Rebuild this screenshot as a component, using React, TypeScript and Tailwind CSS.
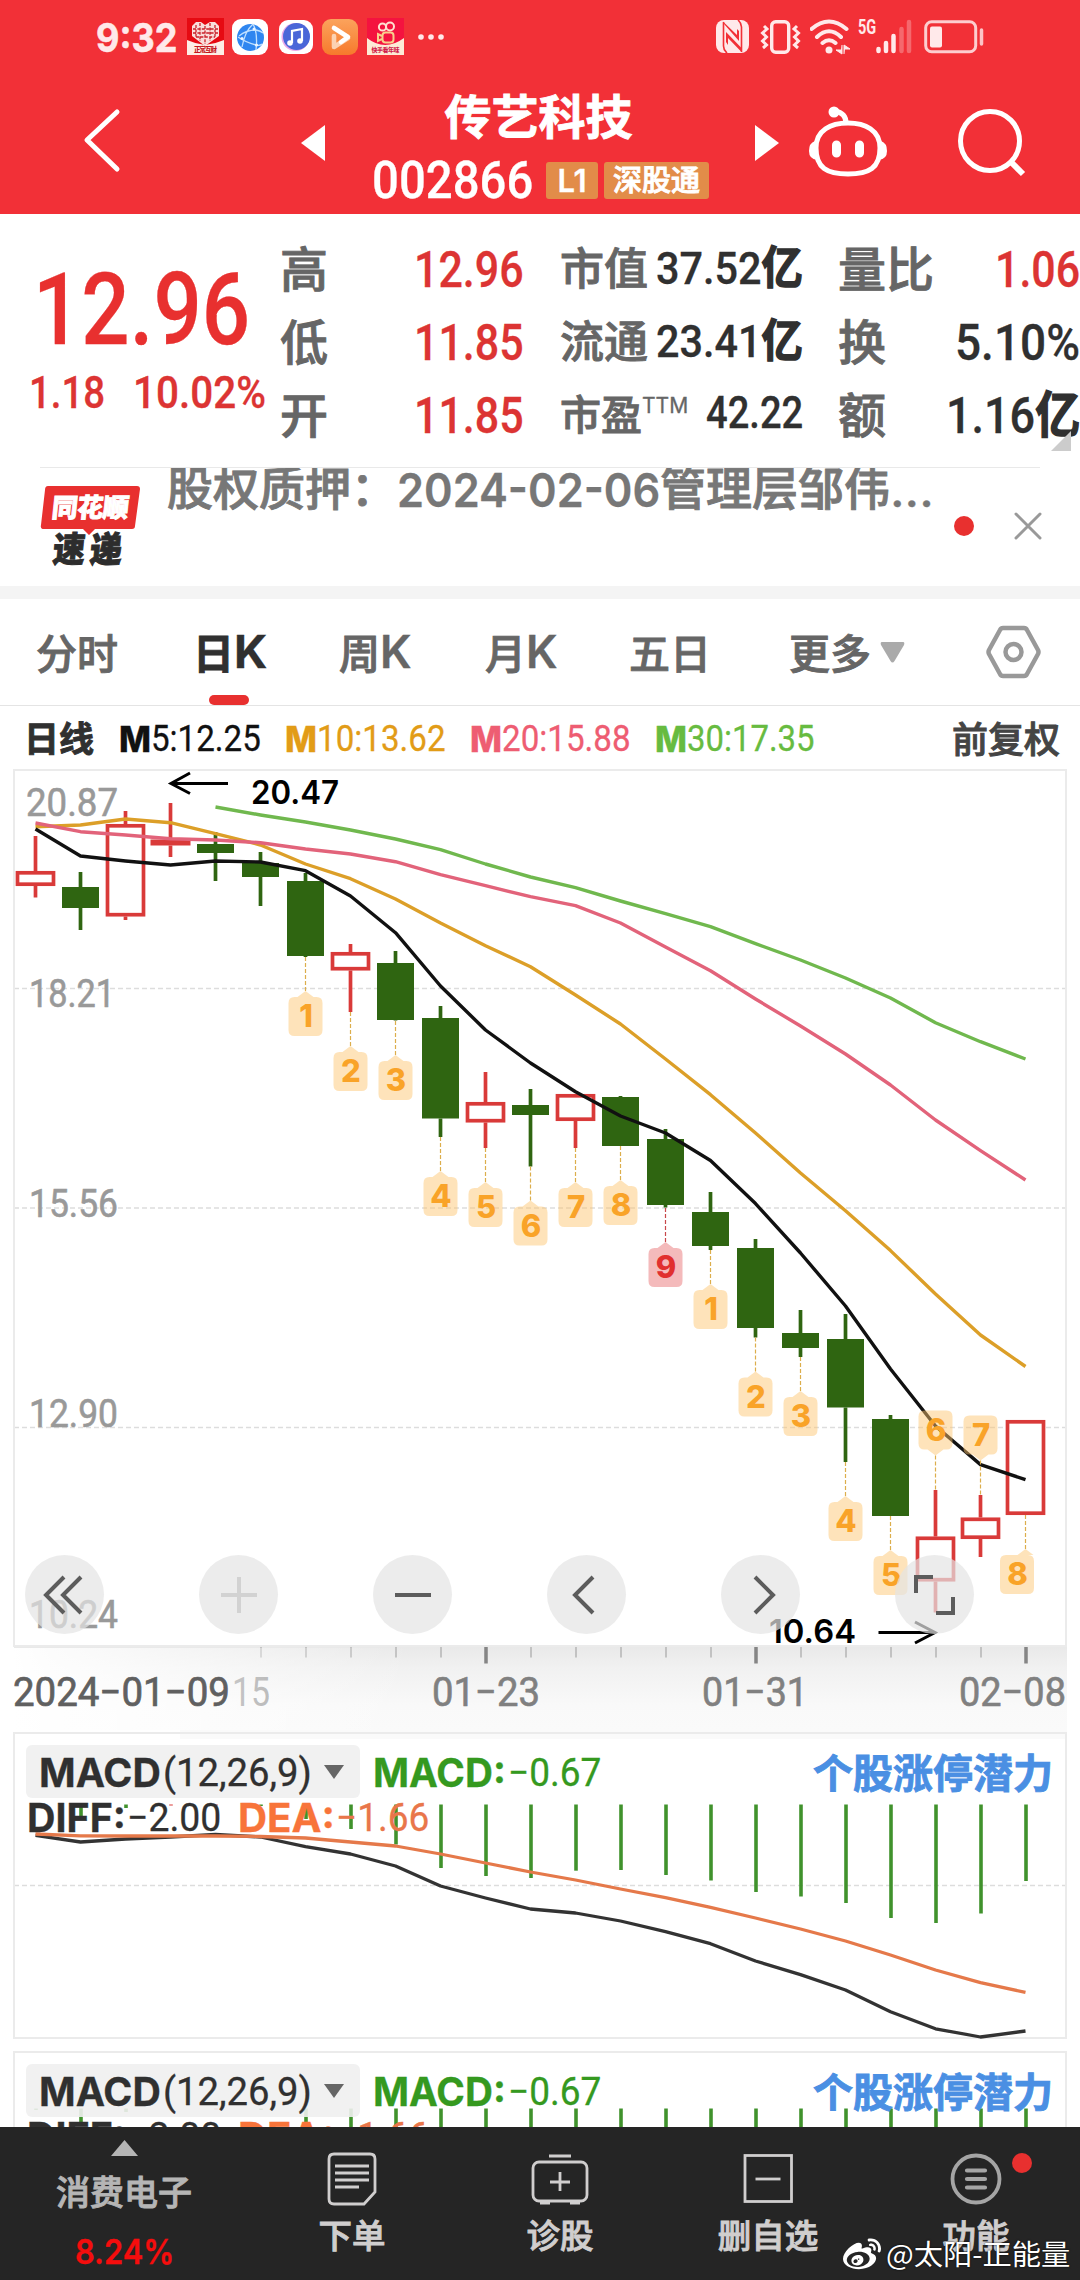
import React, { useLayoutEffect, useRef } from "react";
import { FaWeibo } from "react-icons/fa";

/** Single line of text squeezed or stretched to an exact width. */
function Fit({ w, className = "", children }: { w: number; className?: string; children: React.ReactNode }) {
  const ref = useRef<HTMLSpanElement>(null);
  useLayoutEffect(() => {
    const el = ref.current;
    if (el && el.offsetWidth) el.style.transform = `scaleX(${w / el.offsetWidth})`;
  }, [w]);
  return (
    <span className={"block shrink-0 whitespace-nowrap " + className} style={{ width: w }}>
      <span ref={ref} className="inline-block origin-left">
        {children}
      </span>
    </span>
  );
}

const CJK = "font-['Noto_Sans_CJK_SC',sans-serif] [-webkit-text-stroke:0.9px]";
const NUM = "font-['Roboto','Noto_Sans_CJK_SC',sans-serif] [-webkit-text-stroke:0.3px]";
const GEO = "font-['Inter','Noto_Sans_CJK_SC',sans-serif] [-webkit-text-stroke:0.3px]";

function StatusBar() {
  return (
    <div className="flex h-[72px] items-center pt-px text-[#ffe9ea]">
      <Fit w={81} className="ml-[96px] font-['Inter',sans-serif] text-[40px] font-bold leading-[40px] [-webkit-text-stroke:0.6px] pt-[3px]">9:32</Fit>
      <svg className="ml-[10px]" width="37" height="37" viewBox="0 0 37 37">
        <rect width="37" height="37" fill="#e60a12" />
        <path d="M0 22Q9 26 18 27Q28 26 37 22V37H0Z" fill="#fdeee6" />
        <path d="M18 28L5 18V8L9 4H14L18 7L23 4H28L32 8V18Z" fill="#f9dedb" />
        <path d="M9 7V19M13 5V23M18 8V26M23 5V23M28 7V19M6 11H31M6 15H31M9 19H28" stroke="#c9212a" strokeWidth="1.3" strokeDasharray="3 1.4" />
        <text x="18.5" y="34" textAnchor="middle" fontSize="6.5" fontWeight="900" fill="#c4161c" fontFamily="Noto Sans CJK SC" textLength="23">正常互财</text>
      </svg>
      <svg className="ml-[8px]" width="36" height="36" viewBox="0 0 36 36">
        <rect width="36" height="36" rx="9" fill="#fff" />
        <circle cx="18.500" cy="18.500" r="13.500" fill="#2f86f0" />
        <path d="M6 18Q13 23 24 26Q28 27 30 25M21 5Q13 12 10 28M21 5Q26 14 24 31M7 17Q14 11 24 11Q29 12 31 14" stroke="#bfe0ff" strokeWidth="1.300" fill="none" />
        <circle cx="10" cy="19.500" r="1.500" fill="#e9f4ff" /><circle cx="24.500" cy="26" r="1.600" fill="#e9f4ff" /><circle cx="22" cy="10" r="1.500" fill="#e9f4ff" />
      </svg>
      <svg className="ml-[11px]" width="34" height="34" viewBox="0 0 34 34">
        <rect width="34" height="34" rx="9" fill="#fff" />
        <circle cx="16.500" cy="17" r="14" fill="#e9a9e8" />
        <circle cx="17.500" cy="16.500" r="13.500" fill="#4a66d8" />
        <path d="M13 23V11L23 9V21" fill="none" stroke="#fff" strokeWidth="2.200" />
        <circle cx="11" cy="23" r="2.800" fill="#fff" /><circle cx="21" cy="21" r="2.800" fill="#fff" />
      </svg>
      <svg className="ml-[9px]" width="36" height="36" viewBox="0 0 36 36">
        <defs><linearGradient id="vid" x1="0" x2="0" y1="0" y2="1"><stop stopColor="#fba35c" /><stop offset="1" stopColor="#f7792c" /></linearGradient></defs>
        <rect width="36" height="36" rx="9" fill="url(#vid)" />
        <path d="M12 17V28L26 19" fill="none" stroke="#fcd2b2" strokeWidth="4.600" strokeLinejoin="round" strokeLinecap="round" />
        <path d="M12 9L26 18L19 23" fill="none" stroke="#fff" strokeWidth="4.600" strokeLinejoin="round" strokeLinecap="round" />
      </svg>
      <svg className="ml-[9px]" width="37" height="37" viewBox="0 0 37 37">
        <rect width="37" height="37" fill="#f4133f" />
        <path d="M0 20Q18 34 37 20V37H0Z" fill="#fdebd6" />
        <g fill="none" stroke="#ffe0d0" strokeWidth="2">
          <circle cx="15.500" cy="9" r="3.600" /><circle cx="23" cy="8.500" r="4" />
          <rect x="15.500" y="14.500" width="11" height="10" rx="3" stroke="#f8cf8c" /><path d="M15 18L11 16V23L15 21" stroke="#f8cf8c" />
        </g>
        <text x="18.500" y="33.500" textAnchor="middle" fontSize="6" fontWeight="900" fill="#d01c4a" fontFamily="Noto Sans CJK SC" textLength="28">快手看年味</text>
      </svg>
      <svg className="ml-[13px]" width="28" height="8" viewBox="0 0 28 8" fill="currentColor">
        <circle cx="4" cy="4" r="2.800" /><circle cx="14" cy="4" r="2.800" /><circle cx="24" cy="4" r="2.800" />
      </svg>
      <svg className="ml-[271px]" width="33" height="33" viewBox="0 0 33 33">
        <rect width="33" height="33" rx="8" fill="currentColor" />
        <path d="M7.500 2V26Q7.500 30 11 33M22 0Q25.500 3 25.500 7V32" fill="none" stroke="#f23037" strokeWidth="1.600" />
        <path d="M7 1.500L21 15V9L23 11V21L8 4ZM25.500 32L12 18V25L10 22V12L25.500 28Z" fill="#f23037" />
      </svg>
      <svg className="ml-[11px]" width="41" height="34" viewBox="0 0 41 34" fill="none" stroke="currentColor" strokeWidth="3.400">
        <rect x="11.700" y="1.700" width="17" height="30.600" rx="4" />
        <path d="M4 6L7 9L2.500 13L6.500 17L2.500 21L6.500 25L3 28M37 6L34 9L38.500 13L34.500 17L38.500 21L34.500 25L38 28" strokeWidth="3" />
      </svg>
      <svg className="ml-[9px]" width="41" height="36" viewBox="0 0 41 36" fill="none" stroke="currentColor" strokeWidth="4">
        <path d="M1.500 10Q19 -5 36.500 10M7 18Q19 6.500 31 18M12.500 24Q19 18.500 25.500 24" strokeLinecap="round" />
        <circle cx="19" cy="31" r="3.500" fill="currentColor" stroke="none" />
        <path d="M32 26V35L26 31H31M34 35V26L40 30H35" fill="currentColor" strokeWidth="1" />
      </svg>
      <Fit w={18} className="ml-[7px] -mt-[20px] font-['Roboto',sans-serif] text-[21px] font-bold leading-[20px]">5G</Fit>
      <svg width="36" height="35" viewBox="0 0 36 35" stroke="currentColor" strokeWidth="4.500" strokeLinecap="round">
        <path d="M2.500 30V32M10 24V32M17.500 17V32" /><path d="M25.500 10V32M33 3V32" opacity=".3" />
      </svg>
      <svg className="ml-[12px]" width="61" height="34" viewBox="0 0 61 34" fill="none" stroke="currentColor">
        <rect x="1.700" y="1.700" width="50" height="30" rx="6" strokeWidth="3" opacity=".85" />
        <rect x="6" y="6.500" width="12" height="21" rx="2" fill="currentColor" stroke="none" />
        <path d="M57.500 10V24" strokeWidth="3.500" strokeLinecap="round" opacity=".8" />
      </svg>
    </div>
  );
}

function Header() {
  return (
    <div className="flex h-[142px] items-start text-white">
      <svg className="ml-[80px] mt-[34px]" width="44" height="70" viewBox="0 0 44 70" fill="none" stroke="currentColor" strokeWidth="5" strokeLinecap="round" strokeLinejoin="round">
        <path d="M37 6L7 34L37 63" />
      </svg>
      <svg className="ml-[177px] mt-[53px]" width="24" height="36" viewBox="0 0 24 36" fill="currentColor"><path d="M24 0V36L0 18Z" /></svg>
      <div className="ml-[47px] w-[338px]">
        <div className={`mt-[16px] pr-[5px] text-center text-[47px] font-bold leading-[52px] ${CJK}`}>传艺科技</div>
        <div className="mt-[15px] flex items-center">
          <Fit w={161} className={`text-[52px] font-medium leading-[48px] pt-[2px] ${NUM}`}>002866</Fit>
          <div className={`ml-[13px] flex h-[37px] w-[52px] items-center justify-center rounded-[3px] bg-[#e28c49] text-[31px] font-semibold leading-[37px] ${GEO}`}>L1</div>
          <div className={`ml-[6px] flex h-[37px] w-[105px] items-center justify-center rounded-[3px] bg-[#e28c49] pb-[3px] text-[29px] font-medium leading-[37px] ${CJK}`}>深股通</div>
        </div>
      </div>
      <svg className="ml-[45px] mt-[53px]" width="24" height="36" viewBox="0 0 24 36" fill="currentColor"><path d="M0 0V36L24 18Z" /></svg>
      <svg className="ml-[29px] mt-[33px]" width="80" height="75" viewBox="0 0 80 75" fill="none" stroke="currentColor" strokeWidth="5">
        <path d="M40 18C57 18 72 25 72 43C72 63 61 69 40 69C19 69 8 63 8 43C8 25 23 18 40 18Z" />
        <path d="M38 18Q38 8 27 6" />
        <circle cx="26" cy="7" r="5.500" fill="currentColor" stroke="none" />
        <path d="M7 36Q1 38 1 46Q1 54 9 55ZM73 36Q79 38 79 46Q79 54 71 55Z" fill="currentColor" stroke="none" />
        <path d="M28.500 40V48M51.500 40V48" strokeWidth="9" strokeLinecap="round" />
      </svg>
      <svg className="ml-[68px] mt-[34px]" width="72" height="72" viewBox="0 0 72 72" fill="none" stroke="currentColor" strokeWidth="5">
        <circle cx="34" cy="35" r="29.500" /><path d="M55 56L67 68" strokeWidth="6" />
      </svg>
    </div>
  );
}

function Row({ label, children, size = "text-[48px]" }: { label: React.ReactNode; children: React.ReactNode; size?: string }) {
  return (
    <div className={`flex h-[73px] items-center justify-between text-[#666] ${CJK}`}>
      <span className={`-ml-px -mt-[5px] whitespace-nowrap font-medium leading-[60px] ${size}`}>{label}</span>
      {children}
    </div>
  );
}

const red = "text-[50px] pt-[2px] font-medium leading-[60px] text-[#dc3433] " + NUM;
const dark = "font-medium leading-[60px] text-[#303030] " + NUM;
const yi = "font-bold [-webkit-text-stroke:1.4px]";

function Quote() {
  return (
    <div className="relative flex h-[253px] pt-[18px]">
      <div className="w-[281px] text-[#e8302f]">
        <Fit w={217} className={`ml-[33px] mt-[28px] text-[100px] font-medium leading-[100px] ${NUM}`}>12.96</Fit>
        <div className="mt-[8px] flex text-[45px] font-medium leading-[50px] text-[#dc3433]">
          <Fit w={76} className={`ml-[29px] ${NUM}`}>1.18</Fit>
          <Fit w={133} className={`ml-[28px] ${NUM}`}>10.02%</Fit>
        </div>
      </div>
      <div className="w-[243px]">
        <Row label="高"><Fit w={110} className={red}>12.96</Fit></Row>
        <Row label="低"><Fit w={110} className={red}>11.85</Fit></Row>
        <Row label="开"><Fit w={110} className={red}>11.85</Fit></Row>
      </div>
      <div className="ml-[37px] w-[242px]">
        <Row label="市值" size="text-[44px]"><Fit w={147} className={`text-[45px] ${dark}`}>37.52<b className={yi}>亿</b></Fit></Row>
        <Row label="流通" size="text-[44px]"><Fit w={147} className={`text-[45px] ${dark}`}>23.41<b className={yi}>亿</b></Fit></Row>
        <Row label={<span className="flex">市盈<Fit w={46} className="-mt-[7px] font-['Inter',sans-serif] text-[22px] font-normal [-webkit-text-stroke:0.3px]">TTM</Fit></span>} size="text-[41px]">
          <Fit w={97} className={`-mt-[4px] text-[44px] ${dark}`}>42.22</Fit>
        </Row>
      </div>
      <div className="ml-[36px] w-[241px]">
        <Row label="量比"><Fit w={85} className={red}>1.06</Fit></Row>
        <Row label="换"><Fit w={125} className={`pt-[2px] text-[50px] ${dark}`}>5.10%</Fit></Row>
        <Row label="额"><Fit w={134} className={`pt-[2px] text-[50px] ${dark}`}>1.16<b className={yi}>亿</b></Fit></Row>
      </div>
      <svg className="absolute bottom-[16px] right-[9px]" width="20" height="20" viewBox="0 0 20 20"><path d="M20 0V20H0Z" fill="#ccc" /></svg>
    </div>
  );
}

function News() {
  return (
    <div className="flex h-[119px] flex-col pl-[40px]">
      <div className="h-px w-[1000px] shrink-0 bg-[#e9e9e9]" />
      <div className="flex h-[118px] items-start overflow-hidden">
        <div className={`mt-[18px] w-[100px] ${CJK}`}>
          <div className="relative flex h-[43px] items-center justify-center">
            <svg className="absolute inset-0" width="100" height="50" viewBox="0 0 100 50"><path d="M8 0H97Q100 0 100 3L95 40Q95 43 92 43H55L49 49L43 43H4Q0 43 1 39L5 4Q5 0 8 0Z" fill="#e8302f" /></svg>
            <span className="relative -skew-x-6 pb-[3px] text-[26px] font-black leading-[30px] tracking-[-0.5px] text-white">同花顺</span>
          </div>
          <div className="-mt-px -skew-x-6 scale-y-110 pl-[1px] text-center text-[32px] font-black leading-[38px] tracking-[5px] text-[#2d2d2d]">速递</div>
        </div>
        <div className={`ml-[27px] flex h-[60px] w-[770px] text-[46px] font-medium leading-[52px] text-[#777] ${CJK}`}>
          <span className="-mt-[9px] w-[230px] shrink-0">股权质押：</span>
          <Fit w={263} className={`-mt-[4px] text-[47px] font-semibold ${GEO}`}>2024-02-06</Fit>
          <span className="-mt-[9px] whitespace-nowrap">管理层邹伟</span>
          <Fit w={44} className={`-mt-[4px] ${GEO}`}>...</Fit>
        </div>
        <span className="ml-[17px] mt-[48px] size-[20px] rounded-full bg-[#e8302f]" />
        <svg className="ml-[40px] mt-[44px]" width="28" height="28" viewBox="0 0 28 28" stroke="#999" strokeWidth="3" strokeLinecap="round"><path d="M2 2L26 26M26 2L2 26" /></svg>
      </div>
    </div>
  );
}

function Tabs() {
  const t = "whitespace-nowrap pb-[2px] text-[41px] font-medium leading-[50px] text-[#666]";
  return (
    <div className={`flex h-[107px] items-center border-b border-[#e4e4e4] ${CJK}`}>
      <span className={`ml-[36px] w-[157px] ${t}`}>分时</span>
      <span className="relative flex h-full w-[146px] items-center">
        <span className="flex items-center whitespace-nowrap text-[41px] font-bold leading-[50px] text-[#303030]"><span className="pb-[2px]">日</span><Fit w={33} className={`text-[45px] ${GEO}`}>K</Fit></span>
        <span className="absolute bottom-0 left-[16px] h-[10px] w-[40px] rounded-full bg-[#e8302f]" />
      </span>
      <span className={`flex w-[146px] items-center ${t}`}>周<Fit w={32} className={`pt-[2px] text-[45px] font-semibold ${GEO}`}>K</Fit></span>
      <span className={`flex w-[144px] items-center ${t}`}>月<Fit w={32} className={`pt-[2px] text-[45px] font-semibold ${GEO}`}>K</Fit></span>
      <span className={`w-[160px] ${t}`}>五日</span>
      <span className={t}>更多</span>
      <svg className="ml-[9px]" width="25" height="21" viewBox="0 0 25 21" fill="#aaa"><path d="M2 0H23Q25 0 24 3L14.500 19Q12.500 22 10.500 19L1 3Q0 0 2 0Z" /></svg>
      <svg className="ml-[81px]" width="55" height="54" viewBox="0 0 55 54" fill="none" stroke="#999" strokeWidth="4.500" strokeLinejoin="round">
        <path d="M17 3H38Q40 3 41 5L52 25Q53 27 52 29L41 49Q40 51 38 51H17Q15 51 14 49L3 29Q2 27 3 25L14 5Q15 3 17 3Z" /><circle cx="27.500" cy="27" r="8" />
      </svg>
    </div>
  );
}

function Ma({ c, n, v, w, ml }: { c: string; n: string; v: string; w: number; ml: string }) {
  return (
    <span className={`flex items-center ${c} ${ml}`}>
      <Fit w={32} className={`text-[36px] font-extrabold leading-[40px] ${GEO}`}>M</Fit>
      <Fit w={w} className={`text-[37px] font-normal leading-[40px] ${NUM}`}>{n}:{v}</Fit>
    </span>
  );
}

function MaRow() {
  return (
    <div className={`flex h-[60px] items-center pt-[6px] ${CJK}`}>
      <span className="ml-[24px] -mt-[4px] w-[95px] text-[35px] font-bold leading-[40px] text-[#303030]">日线</span>
      <Ma ml="" c="text-[#111]" n="5" v="12.25" w={110} />
      <Ma ml="ml-[24px]" c="text-[#e29c17]" n="10" v="13.62" w={129} />
      <Ma ml="ml-[24px]" c="text-[#ee5d72]" n="20" v="15.88" w={129} />
      <Ma ml="ml-[24px]" c="text-[#67bb40]" n="30" v="17.35" w={128} />
      <span className="-mt-[4px] ml-auto mr-[20px] text-[36px] font-medium leading-[40px] text-[#444]">前复权</span>
    </div>
  );
}

const X = (i: number) => 35.5 + 45 * i;
// [direction, high, top of body, bottom of body, low] in drawing units
const candles: [number, number, number, number, number][] = [
  [1, 836, 871, 886, 897.5], [0, 872, 887, 908, 930], [1, 811, 824, 916.5, 920], [2, 803, 839.5, 845.5, 857],
  [0, 832, 844, 853, 881], [0, 852, 863, 877, 906], [0, 873, 881, 956, 957], [1, 944, 952, 970.5, 1012],
  [0, 951, 963, 1020, 1020.5], [0, 1006, 1018, 1118.5, 1137], [1, 1072, 1102, 1122.5, 1148], [0, 1089, 1105, 1115, 1166.5],
  [1, 1094, 1094, 1121, 1148], [0, 1096, 1097, 1146, 1146], [0, 1129, 1139, 1205, 1207.5], [0, 1192, 1212, 1246, 1250],
  [0, 1239, 1248, 1328, 1337.5], [0, 1310, 1333, 1348, 1357], [0, 1314, 1339, 1407.5, 1462], [0, 1415, 1419, 1516, 1516],
  [1, 1490, 1536.5, 1581.5, 1612.5], [1, 1495, 1517.5, 1539, 1557], [1, 1420, 1420, 1515, 1515],
];
const m5 = [829, 856, 861, 865, 861, 862, 870.7, 896, 932.7, 986, 1030, 1063, 1091.7, 1116, 1133, 1160.5, 1203.6, 1253, 1306, 1369, 1426, 1464.6, 1479.6];
const m10 = [826.7, 825, 819, 822.7, 833.7, 845, 864, 878.7, 899, 923, 945.7, 966.7, 995, 1024, 1059, 1094.7, 1133, 1173, 1210.7, 1250.6, 1294, 1335, 1366.5];
const m20 = [823, 831.7, 835, 838.7, 840, 842.7, 849, 854, 861.7, 874.7, 885.7, 896.7, 905.7, 923, 947, 970.7, 999, 1026, 1054, 1085, 1120, 1150.6, 1180];
const m30 = [807, 815, 822, 830, 839, 849.7, 864, 877, 887.7, 901, 913.7, 926.7, 943.7, 960, 978, 998, 1022.7, 1041.7, 1059];
const pts = (a: number[], s = 0) => a.map((y, i) => `${X(i + s)},${y}`).join(" ");
// [candle index, count, apex y, points down]
const tags: [number, number, number, boolean?][] = [
  [6, 1, 991], [7, 2, 1046], [8, 3, 1055], [9, 4, 1171], [10, 5, 1182], [11, 6, 1200.5], [12, 7, 1182], [13, 8, 1180], [14, 9, 1242],
  [15, 1, 1284], [16, 2, 1371.5], [17, 3, 1391], [18, 4, 1496], [19, 5, 1550], [20, 6, 1455.5, true], [21, 7, 1460.5, true], [22, 8, 1549],
];

function Axis({ x, y, w, children }: { x: number; y: number; w: number; children: string }) {
  return <text x={x} y={y} fontSize="39" textLength={w} lengthAdjust="spacingAndGlyphs" fill="#999" stroke="#999" strokeWidth="0.6" className="font-['Roboto',sans-serif]">{children}</text>;
}

function RoundButton({ children, faint }: { children: React.ReactNode; faint?: boolean }) {
  return (
    <span className={`flex size-[79px] items-center justify-center rounded-full bg-[#e4e4e4]/70 ${faint ? "text-[#d2d2d2]" : "text-[#5c5c5c]"}`}>
      <svg width="50" height="50" viewBox="-25 -25 50 50" fill="none" stroke="currentColor" strokeWidth="4">{children}</svg>
    </span>
  );
}

function KChart() {
  return (
    <div className="relative h-[964px]">
      <svg className="block" width="1080" height="964" viewBox="0 766 1080 964">
        <defs>
          <linearGradient id="sh" x1="0" x2="0" y1="0" y2="1"><stop stopColor="#e9e9e9" /><stop offset=".25" stopColor="#f1f1f1" /><stop offset=".7" stopColor="#f9f9f9" /><stop offset="1" stopColor="#fafafa" /></linearGradient>
          <linearGradient id="fade" x1="0" x2="1" y1="0" y2="0"><stop offset="0" stopColor="#fff" /><stop offset=".1" stopColor="#fff" stopOpacity=".85" /><stop offset="1" stopColor="#fff" stopOpacity="0" /></linearGradient>
        </defs>
        <rect x="14" y="1647" width="1053" height="83" fill="url(#sh)" />
        {candles.map((_, i) => i > 4 && (
          <line key={i} x1={X(i) + 0.5} x2={X(i) + 0.5} y1="1647" y2={i === 10 || i === 16 || i === 22 ? 1663.5 : 1657.5} stroke={i === 10 || i === 16 || i === 22 ? "#858585" : "#c2c2c2"} strokeWidth={i === 10 || i === 16 || i === 22 ? 3.5 : 2} />
        ))}
        <text x="232" y="1706" fontSize="40" textLength="38" lengthAdjust="spacingAndGlyphs" fill="#9a9a9a" className="font-['Roboto',sans-serif]">15</text>
        <rect x="13" y="1648" width="400" height="82" fill="url(#fade)" />
        <g stroke="#ddd" strokeWidth="1.300" strokeDasharray="5 3"><path d="M14 988.500H1066M14 1208H1066M14 1427.500H1066" /></g>
        <rect x="14" y="770" width="1052" height="876" fill="none" stroke="#ebebeb" strokeWidth="2" />
        <Axis x={26} y={816} w={92}>20.87</Axis>
        <Axis x={29} y={1007} w={86}>18.21</Axis>
        <Axis x={29} y={1217} w={89}>15.56</Axis>
        <Axis x={29} y={1427} w={89}>12.90</Axis>
        <Axis x={29} y={1627.5} w={89}>10.24</Axis>
        {candles.map(([d, h, t, b, l], i) => {
          const c = d ? "#d93a39" : "#2f6511";
          const x = X(i);
          return (
            <g key={i} stroke={c} strokeWidth="3.700">
              {h < t && <line x1={x} x2={x} y1={h} y2={t} />}
              {l > b && <line x1={x} x2={x} y1={b} y2={l} />}
              {d === 1 ? <rect x={x - 18} y={t + 1.8} width="36" height={b - t - 3.6} fill="#fff" /> : <rect x={x - (d ? 20 : 18.500)} y={t} width={d ? 40 : 37} height={b - t} fill={c} stroke="none" />}
            </g>
          );
        })}
        <g fill="none" strokeWidth="3.400" strokeLinejoin="round">
          <polyline points={pts(m30, 4)} stroke="#70b84e" />
          <polyline points={pts(m10)} stroke="#dc9f28" />
          <polyline points={pts(m20)} stroke="#e2637a" />
          <polyline points={pts(m5)} stroke="#111" />
        </g>
        {tags.map(([i, n, y, up]) => {
          const hot = n === 9;
          const x = X(i);
          const s = i === 22 ? -8.5 : 0;
          const k = up ? -1 : 1;
          return (
            <g key={i}>
              <line x1={x} x2={x} y1={y - 34 * k} y2={y} stroke={hot ? "#c8474a" : "#dcae4c"} strokeWidth="1.200" strokeDasharray="4 2" />
              <g transform={`translate(${x} ${y}) scale(1 ${k})`}>
                <path d={`M0 0L8 6H${11 + s}Q${17 + s} 6 ${17 + s} 12V39Q${17 + s} 45 ${11 + s} 45H${-11 + s}Q${-17 + s} 45 ${-17 + s} 39V12Q${-17 + s} 6 ${-11 + s} 6H-8Z`} fill={hot ? "#ea7578" : "#fdc46e"} fillOpacity={hot ? 0.5 : 0.48} />
              </g>
              <text x={x + s + 0.5} y={up ? y - 14.5 : y + 36} textAnchor="middle" fontSize="31" fontWeight="800" fill={hot ? "#e1302f" : "#f9a328"} className="font-['Inter',sans-serif]">{n}</text>
            </g>
          );
        })}
        <g className="font-['Inter',sans-serif]" fontSize="33" fontWeight="600">
          <text x="251" y="804" textLength="88" lengthAdjust="spacingAndGlyphs">20.47</text>
          <text x="769" y="1643" textLength="87" lengthAdjust="spacingAndGlyphs">10.64</text>
        </g>
        <path d="M228 783.500H172M190 773L171 783.500L190 793.500M878.500 1632.500H934M915 1622L935 1632.500L915 1643" fill="none" stroke="#000" strokeWidth="3" />
        <g className="font-['Roboto',sans-serif] [-webkit-text-stroke:0.5px]" fontSize="40" fill="#808080">
          <text x="13" y="1706" textLength="217" lengthAdjust="spacingAndGlyphs" fill="#606060" stroke="#606060" strokeWidth="0.7">2024−01−09</text>
          <g stroke="#808080" strokeWidth="0.6">
            <text x="432" y="1706" textLength="108" lengthAdjust="spacingAndGlyphs">01−23</text>
            <text x="702" y="1706" textLength="106" lengthAdjust="spacingAndGlyphs">01−31</text>
            <text x="959" y="1706" textLength="107" lengthAdjust="spacingAndGlyphs">02−08</text>
          </g>
        </g>
      </svg>
      <div className="absolute left-[25px] top-[789px] flex gap-[95px]">
        <RoundButton><path d="M-1 -18L-19 0L-1 18M16 -18L-2 0L16 18" /></RoundButton>
        <RoundButton faint><path d="M-18 0H18M0 -18V18" /></RoundButton>
        <RoundButton><path d="M-18 0H18" /></RoundButton>
        <RoundButton><path d="M6 -18L-12 0L6 18" /></RoundButton>
        <RoundButton><path d="M-6 -18L12 0L-6 18" /></RoundButton>
        <RoundButton><path d="M-2 -18H-19V-2M1 18H18V2" /></RoundButton>
      </div>
    </div>
  );
}

const macd = [1806, 1818, 1808, 1805.5, 1805.5, 1806, 1819, 1829, 1844.5, 1868, 1876, 1878, 1870.7, 1870, 1875, 1880.5, 1892, 1896.5, 1903, 1918, 1923, 1913.5, 1881];
const diff = [1835.4, 1842, 1839, 1837, 1834.5, 1837, 1846.7, 1854, 1866, 1886, 1898, 1909, 1913, 1921, 1931.7, 1943.7, 1961, 1974.6, 1990, 2011.7, 2028.8, 2037, 2031];
const dea = [1834, 1835.8, 1836, 1836, 1836, 1836.5, 1838, 1842, 1846, 1854, 1863, 1872, 1880, 1889, 1897.6, 1907.4, 1918, 1929, 1941, 1955, 1970, 1982.6, 1992.4];

function MacdPanel({ lift = 0, size }: { lift?: number; size: string }) {
  return (
    <div className={`relative shrink-0 overflow-hidden ${size}`}>
      <svg className="block" width="1080" height="319" viewBox="0 1730 1080 319">
        {!lift && <rect x="180" y="1730" width="887" height="9" fill="#fafafa" />}
        <path d="M14 1885.500H1066" stroke="#ddd" strokeWidth="1.300" strokeDasharray="5 3" />
        <rect x="14" y="1733" width="1052" height="305" fill="none" stroke="#ebebeb" strokeWidth="2" />
        <g transform={`translate(0 ${-lift})`}>
          {macd.map((y, i) => <line key={i} x1={X(i) + 0.5} x2={X(i) + 0.5} y1="1804.500" y2={y} stroke={i === 3 || i === 4 ? "#d93a39" : "#40922c"} strokeWidth="3.600" />)}
          <g fill="none" strokeWidth="3.300" strokeLinejoin="round">
            <polyline points={pts(diff)} stroke="#333" /><polyline points={pts(dea)} stroke="#e5794a" />
          </g>
        </g>
      </svg>
      <div className="absolute inset-x-0 top-[15px] flex h-[53px] items-center pl-[26px] pr-[27px]">
        <div className="flex h-[53px] w-[334px] items-center rounded-[6px] bg-[#efefef]/90 pl-[13px] pt-[3px] text-[#303030]">
          <Fit w={122} className={`text-[39px] font-bold leading-[50px] ${GEO}`}>MACD</Fit>
          <Fit w={149} className={`ml-[2px] text-[39px] leading-[50px] ${NUM}`}>(12,26,9)</Fit>
          <svg className="-mt-[3px] ml-[12px]" width="20" height="14" viewBox="0 0 20 14" fill="#666"><path d="M0 0H20L10 14Z" /></svg>
        </div>
        <Fit w={133} className={`ml-[13px] pt-[3px] text-[39px] font-bold leading-[50px] text-[#35991f] ${GEO}`}>MACD:</Fit>
        <Fit w={93} className={`ml-[2px] pt-[3px] text-[39px] leading-[50px] text-[#35991f] ${NUM}`}>−0.67</Fit>
        <span className={`ml-auto pb-[1px] text-[40px] font-bold leading-[50px] text-[#4a8fe3] ${CJK}`}>个股涨停潜力</span>
      </div>
      <div className="absolute left-[27px] top-[63px] flex text-[39px] leading-[50px]">
        <Fit w={99} className={`font-bold text-[#303030] ${GEO}`}>DIFF:</Fit>
        <Fit w={94} className={`ml-[1px] text-[#303030] ${NUM}`}>−2.00</Fit>
        <Fit w={97} className={`ml-[17px] font-bold text-[#f8743a] ${GEO}`}>DEA:</Fit>
        <Fit w={93} className={`ml-[1px] text-[#e9764a] ${NUM}`}>−1.66</Fit>
      </div>
    </div>
  );
}

function NavItem({ label, icon, dot }: { label: string; icon: React.ReactNode; dot?: boolean }) {
  return (
    <div className="relative flex w-[208px] flex-col items-center">
      <svg className="mt-[23px]" width="60" height="58" viewBox="-30 -29 60 58" fill="none" stroke="#d0cece" strokeWidth="2.800">{icon}</svg>
      <span className="mt-px text-[33.5px] font-medium leading-[50px] text-[#d0cece]">{label}</span>
      {dot && <span className="absolute left-[140px] top-[26px] size-[20px] rounded-full bg-[#e8302f]" />}
    </div>
  );
}

function BottomNav() {
  return (
    <div className={`relative flex h-[153px] shrink-0 bg-[#252525] ${CJK}`}>
      <div className="flex w-[248px] flex-col items-center">
        <svg className="mt-[13px]" width="27" height="16" viewBox="0 0 27 16"><path d="M13.500 0L27 16H0Z" fill="#b5b5b5" /></svg>
        <span className="mt-[10px] text-[34px] font-medium leading-[50px] text-[#b5b5b5]">消费电子</span>
        <Fit w={99} className={`mt-[11px] text-[34px] font-semibold leading-[50px] text-[#f50d0d] ${GEO}`}>8.24%</Fit>
      </div>
      <NavItem label="下单" icon={<><path d="M-18 -25H18Q23 -25 23 -20V13L12 25H-18Q-23 25 -23 20V-20Q-23 -25 -18 -25Z" /><path d="M-17 -13H17M-17 -6H17M-17 1H17M-17 8H7" /></>} />
      <NavItem label="诊股" icon={<><rect x="-27" y="-17" width="54" height="39" rx="6" /><path d="M-11 -23H11M-10 3H10M0 -7V12" /><path d="M-20 24H-10M10 24H20" strokeWidth="3" /></>} />
      <NavItem label="删自选" icon={<><rect x="-23" y="-23.500" width="46.500" height="46" /><path d="M-12.500 0H12.500" /></>} />
      <NavItem dot label="功能" icon={<g stroke="#a5a5a5"><circle r="23.500" strokeWidth="3.800" /><path d="M-9 -8.500H9M-9 0H9M-9 8.500H9" strokeWidth="4.200" strokeLinecap="round" /></g>} />
      <div className="absolute bottom-[1px] right-[10px] flex items-center text-white [-webkit-text-stroke:0px]">
        <FaWeibo className="text-[38px]" />
        <span className="ml-[5px] flex items-center pb-[3px] text-[28px] leading-[45px] [text-shadow:0_0_2px_#000]"><Fit w={184}>@太阳-正能量</Fit></span>
      </div>
    </div>
  );
}

export default function App() {
  return (
    <div className="flex h-[2280px] w-[1080px] flex-col overflow-hidden bg-white">
      <div className="shrink-0 bg-[#f23037]">
        <StatusBar />
        <Header />
      </div>
      <div className="shrink-0"><Quote /></div>
      <div className="shrink-0"><News /></div>
      <div className="h-[13px] shrink-0 bg-[#f4f4f4]" />
      <div className="shrink-0"><Tabs /></div>
      <div className="shrink-0"><MaRow /></div>
      <div className="shrink-0"><KChart /></div>
      <MacdPanel size="h-[319px]" />
      <MacdPanel size="h-[78px]" lift={15} />
      <BottomNav />
    </div>
  );
}
